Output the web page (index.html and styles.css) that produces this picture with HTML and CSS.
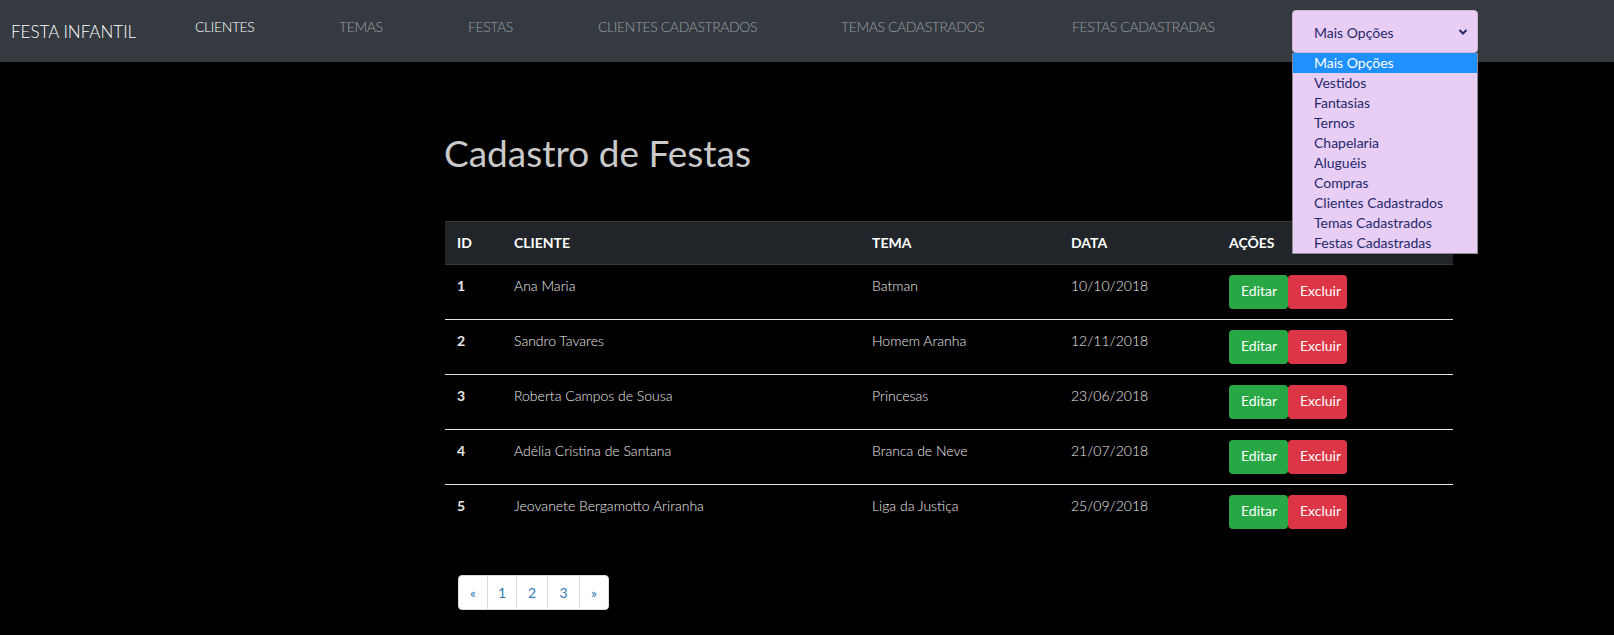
FILE: index.html
```html
<!DOCTYPE html>
<html lang="pt-BR">
<head>
<meta charset="utf-8">
<title>Festa Infantil</title>
<link rel="stylesheet" href="styles.css">
</head>
<body>
<header class="navbar">
  <a class="brand" href="#">FESTA INFANTIL</a>
  <nav class="nav-links">
    <a class="nav-link active" href="#">CLIENTES</a>
    <a class="nav-link" href="#">TEMAS</a>
    <a class="nav-link" href="#">FESTAS</a>
    <a class="nav-link" href="#">CLIENTES CADASTRADOS</a>
    <a class="nav-link" href="#">TEMAS CADASTRADOS</a>
    <a class="nav-link" href="#">FESTAS CADASTRADAS</a>
  </nav>
  <div class="select-wrap">
    <div class="select">
      <span>Mais Opções</span>
      <svg class="chevron" width="10" height="8" viewBox="0 0 10 8"><path d="M1.5 2 L5 5.5 L8.5 2" fill="none" stroke="#1f2a6b" stroke-width="2"/></svg>
    </div>
    <ul class="select-menu">
      <li class="selected">Mais Opções</li>
      <li>Vestidos</li>
      <li>Fantasias</li>
      <li>Ternos</li>
      <li>Chapelaria</li>
      <li>Aluguéis</li>
      <li>Compras</li>
      <li>Clientes Cadastrados</li>
      <li>Temas Cadastrados</li>
      <li>Festas Cadastradas</li>
    </ul>
  </div>
</header>

<main class="content">
  <h1 class="title">Cadastro de Festas</h1>
  <table class="table">
    <colgroup>
      <col class="c-id"><col class="c-cliente"><col class="c-tema"><col class="c-data"><col class="c-acoes">
    </colgroup>
    <thead>
      <tr><th>ID</th><th>CLIENTE</th><th>TEMA</th><th>DATA</th><th>AÇÕES</th></tr>
    </thead>
    <tbody>
      <tr><th>1</th><td>Ana Maria</td><td>Batman</td><td>10/10/2018</td><td><span class="btn btn-green">Editar</span><span class="btn btn-red">Excluir</span></td></tr>
      <tr><th>2</th><td>Sandro Tavares</td><td>Homem Aranha</td><td>12/11/2018</td><td><span class="btn btn-green">Editar</span><span class="btn btn-red">Excluir</span></td></tr>
      <tr><th>3</th><td>Roberta Campos de Sousa</td><td>Princesas</td><td>23/06/2018</td><td><span class="btn btn-green">Editar</span><span class="btn btn-red">Excluir</span></td></tr>
      <tr><th>4</th><td>Adélia Cristina de Santana</td><td>Branca de Neve</td><td>21/07/2018</td><td><span class="btn btn-green">Editar</span><span class="btn btn-red">Excluir</span></td></tr>
      <tr><th>5</th><td>Jeovanete Bergamotto Ariranha</td><td>Liga da Justiça</td><td>25/09/2018</td><td><span class="btn btn-green">Editar</span><span class="btn btn-red">Excluir</span></td></tr>
    </tbody>
  </table>
  <ul class="pagination">
    <li><a href="#">«</a></li>
    <li><a href="#">1</a></li>
    <li><a href="#">2</a></li>
    <li><a href="#">3</a></li>
    <li><a href="#">»</a></li>
  </ul>
</main>
</body>
</html>
```
FILE: styles.css
```css
* { box-sizing: border-box; }

body {
  margin: 0;
  background: #000;
  font-family: Lato, "Segoe UI", "Open Sans", sans-serif;
  font-weight: 300;
  color: #fff;
}

a { text-decoration: none; }

/* ---------- navbar ---------- */
.navbar {
  height: 62px;
  background: #343a40;
  display: flex;
  align-items: center;
  padding-left: 11px;
}

.brand {
  width: 184px;
  font-size: 17px;
  line-height: 24px;
  color: #fff;
  font-weight: 300;
  margin-top: 1px;
}

.nav-links {
  display: grid;
  grid-template-columns: 144px 129px 130px 243px 231px 220px;
  align-self: flex-start;
  margin-top: 16px;
}

.nav-link {
  font-size: 14px;
  line-height: 21px;
  letter-spacing: -0.4px;
  color: rgba(255, 255, 255, 0.5);
}

.nav-link.active { color: #fff; }

.select-wrap {
  position: relative;
  width: 186px;
}

.select {
  height: 43px;
  background: #e8cdf5;
  border: 1px solid #cdb6d8;
  border-radius: 4px;
  display: flex;
  align-items: center;
  justify-content: space-between;
  padding: 2px 9px 0 21px;
  font-size: 14px;
  color: #1f2a6b;
  font-weight: 400;
}

.chevron { margin-top: -1px; }

.select-menu {
  position: absolute;
  top: 43px;
  left: 0;
  width: 186px;
  margin: 0;
  padding: 0;
  list-style: none;
  background: #e8cdf5;
  border: 1px solid #8c8a90;
  border-top: 0;
  z-index: 10;
}

.select-menu li {
  height: 20px;
  line-height: 20px;
  padding-left: 21px;
  font-size: 14px;
  font-weight: 400;
  color: #1f2a6b;
}

.select-menu li.selected {
  background: #1e90ff;
  color: #fff;
}

/* ---------- content ---------- */
.content {
  width: 1008px;
  margin-left: 445px;
  padding-top: 69px;
}

.title {
  margin: 0 0 47px -1px;
  font-size: 37px;
  line-height: 43px;
  font-weight: 400;
  color: #c9c9c9;
}

.table {
  width: 1008px;
  border-collapse: collapse;
  table-layout: fixed;
  font-size: 14px;
}

.c-id { width: 57px; }
.c-cliente { width: 358px; }
.c-tema { width: 199px; }
.c-data { width: 158px; }
.c-acoes { width: 236px; }

.table thead th {
  background: #212529;
  border-top: 1px solid #32383e;
  border-bottom: 1px solid #32383e;
  padding: 10px 12px 11px;
  line-height: 21px;
  text-align: left;
  font-weight: 700;
  color: #fff;
}

.table tbody th,
.table tbody td {
  padding: 10px 12px;
  line-height: 21px;
  text-align: left;
  vertical-align: top;
  color: #ececec;
}

.table tbody th { font-weight: 700; color: #e6e6e6; }

.table tbody tr + tr th,
.table tbody tr + tr td { border-top: 1px solid #e2e2e2; }

.btn {
  display: inline-block;
  height: 34px;
  padding: 6px 12px;
  line-height: 20px;
  font-size: 14px;
  font-weight: 400;
  color: #fff;
  border-radius: 4px;
  vertical-align: top;
}

.btn-green { background: #28a745; width: 59px; }
.btn-red { background: #dc3545; width: 59px; }

.pagination {
  display: flex;
  list-style: none;
  margin: 36px 0 0 13px;
  padding: 0;
}

.pagination li a {
  display: block;
  height: 35px;
  width: 30px;
  text-align: center;
  line-height: 33px;
  font-size: 14px;
  font-weight: 400;
  color: #337ab7;
  background: #fff;
  border: 1px solid #ddd;
  margin-left: -1px;
}

.pagination li:first-child a {
  margin-left: 0;
  border-radius: 4px 0 0 4px;
}

.pagination li:nth-child(4) a { width: 33px; }
.pagination li:nth-child(3) a { width: 32px; }

.pagination li:last-child a { border-radius: 0 4px 4px 0; }
```
